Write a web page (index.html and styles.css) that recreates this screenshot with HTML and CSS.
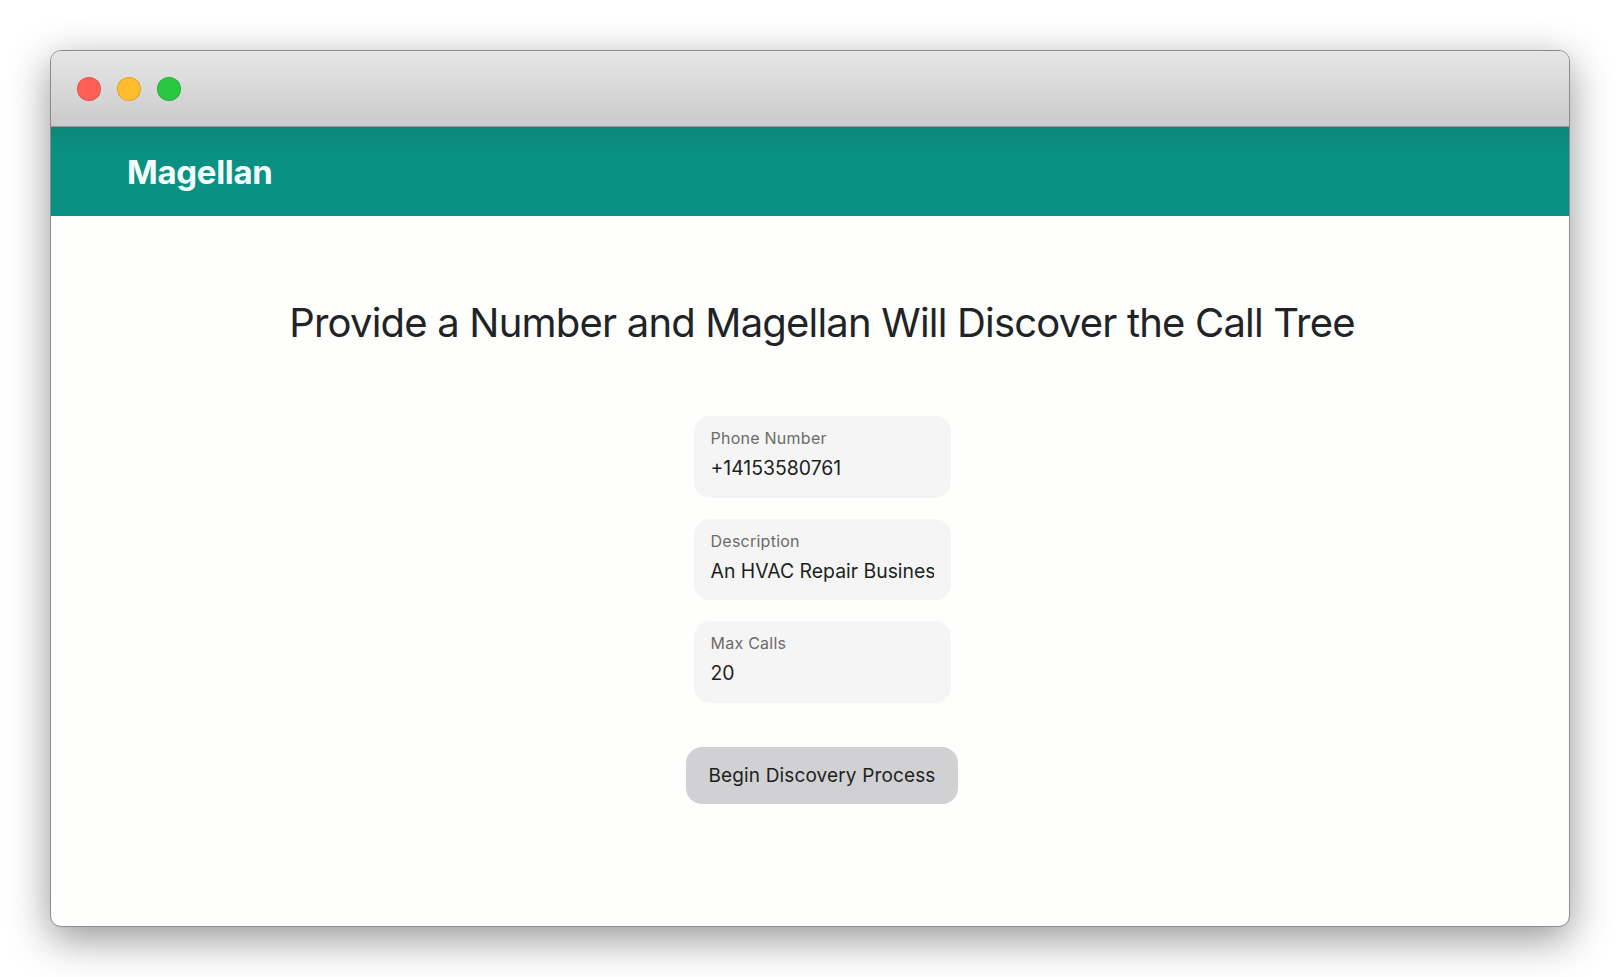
FILE: index.html
```html
<!DOCTYPE html>
<html lang="en">
<head>
  <meta charset="UTF-8" />
  <meta name="viewport" content="width=device-width, initial-scale=1" />
  <title>Magellan</title>
  <link rel="stylesheet" href="styles.css">
</head>
<body>
  <div class="window">
    <div class="titlebar">
      <span class="dot dot-red"></span>
      <span class="dot dot-yellow"></span>
      <span class="dot dot-green"></span>
    </div>
    <header class="app-header">
      <h2>Magellan</h2>
    </header>
    <main class="content">
      <h1>Provide a Number and Magellan Will Discover the Call Tree</h1>
      <form class="discovery-form">
        <label class="field">
          <span>Phone Number</span>
          <input type="text" value="+14153580761" />
        </label>
        <label class="field">
          <span>Description</span>
          <input type="text" value="An HVAC Repair Business" />
        </label>
        <label class="field">
          <span>Max Calls</span>
          <input type="text" value="20" />
        </label>
        <button type="button">Begin Discovery Process</button>
      </form>
    </main>
  </div>
</body>
</html>
```

FILE: styles.css
```css
* {
  box-sizing: border-box;
}
html, body {
  height: 100%;
}
body {
  font-family: Inter, "Liberation Sans", sans-serif;
  background: white;
  margin: 0;
  padding: 50px 50px 50px 50px;
  overflow: hidden;
}
.window {
  width: 1520px;
  height: 877px;
  display: flex;
  flex-direction: column;
  background: #fefefc;
  border: 1px solid #8c8c8c;
  border-radius: 11px;
  overflow: hidden;
  box-shadow: 0 12px 42px rgba(0, 0, 0, 0.42);
}
/* mac style title bar */
.titlebar {
  height: 76px;
  flex-shrink: 0;
  display: flex;
  align-items: center;
  gap: 16px;
  padding: 0 0 0 26px;
  background: linear-gradient(#e6e6e6, #cbcbcb);
  border-bottom: 1px solid #9a9a9a;
}
.dot {
  width: 24px;
  height: 24px;
  border-radius: 50%;
  border: 1px solid rgba(0, 0, 0, 0.12);
}
.dot-red {
  background: #ff5f57;
}
.dot-yellow {
  background: #febc2e;
}
.dot-green {
  background: #28c840;
}
.app-header {
  height: 89px;
  flex-shrink: 0;
  display: flex;
  align-items: center;
  padding-left: 76px;
  background: linear-gradient(#0a877a, #0a9183 30%);
}
.app-header h2 {
  margin: 0;
  color: #f4fffd;
  font-size: 33px;
  font-weight: 700;
  letter-spacing: -0.3px;
}
.content {
  flex: 1;
  display: flex;
  flex-direction: column;
  align-items: center;
  padding-left: 24px;
}
.content h1 {
  margin: 82px 0 0 0;
  color: #212427;
  font-size: 40px;
  line-height: 50px;
  font-weight: 400;
  letter-spacing: -0.8px;
}
.discovery-form {
  margin-top: 68px;
  display: flex;
  flex-direction: column;
  align-items: center;
  gap: 21px;
}
.field {
  width: 257px;
  height: 81.5px;
  display: flex;
  flex-direction: column;
  padding: 13px 17px 0;
  background: #f5f5f5;
  border-radius: 16px;
}
.field span {
  color: #6b6b6b;
  font-size: 16px;
  line-height: 18px;
  letter-spacing: 0.25px;
}
.field input {
  width: 100%;
  margin-top: 9px;
  padding: 0;
  border: none;
  outline: none;
  background: transparent;
  color: #1d1f21;
  font-family: inherit;
  font-size: 19.4px;
  line-height: 24px;
}
button {
  width: 272px;
  height: 57px;
  margin-top: 23.5px;
  background: #d1d1d4;
  color: #1d1f21;
  border: none;
  border-radius: 16px;
  font-family: inherit;
  font-size: 19px;
  letter-spacing: 0.14px;
  cursor: pointer;
}
```
